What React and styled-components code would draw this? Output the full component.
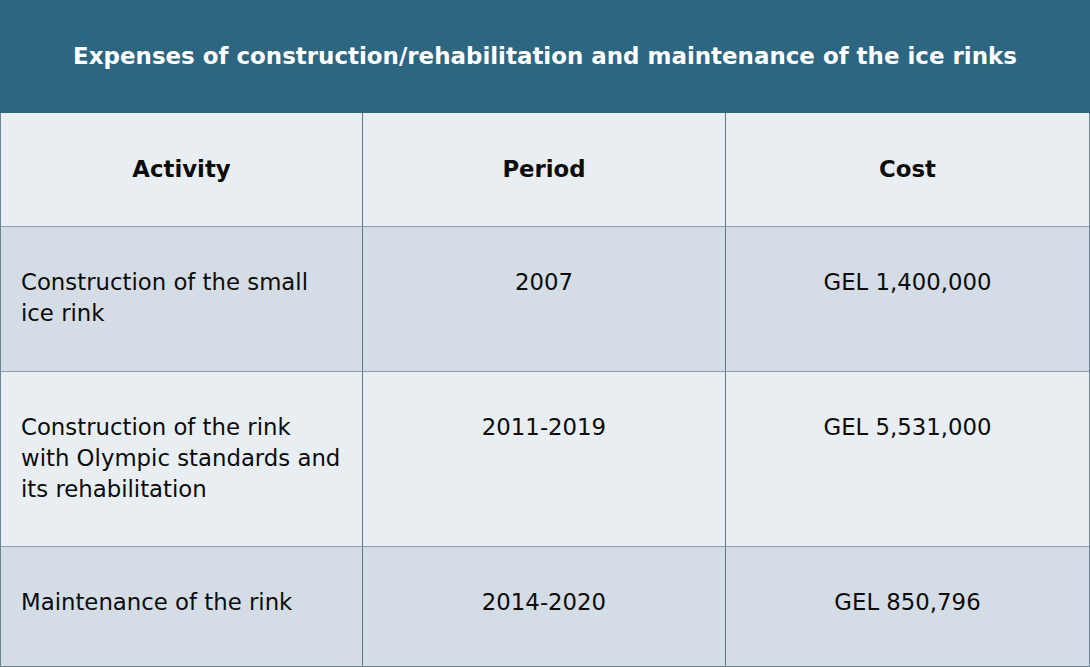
import React from "react";
import styled, { createGlobalStyle } from "styled-components";

const Global = createGlobalStyle`
  html, body { margin: 0; padding: 0; background: #ffffff; }
  body { font-family: "DejaVu Sans", "Liberation Sans", sans-serif; }
`;

const Table = styled.div`
  width: 1090px;
  box-sizing: border-box;
  border-left: 1px solid #6d8593;
  border-right: 1px solid #6d8593;
  border-bottom: 1px solid #6d8593;
  display: grid;
  grid-template-columns: 362px 363px 1fr;
  color: #0c0c0c;
  font-size: 22.8px;
  line-height: 31px;
`;

const Title = styled.div`
  grid-column: 1 / -1;
  height: 113px;
  margin: 0 -1px;
  background: #2d6681;
  color: #ffffff;
  font-weight: bold;
  font-size: 22.95px;
  display: flex;
  align-items: center;
  justify-content: center;
  box-sizing: border-box;
`;

const Cell = styled.div`
  box-sizing: border-box;
  background: ${(p) => p.$bg};
  border-bottom: ${(p) => (p.$last ? "none" : "1px solid #8a9dab")};
  border-right: ${(p) => (p.$end ? "none" : "1px solid #5f7786")};
  text-align: ${(p) => (p.$left ? "left" : "center")};
  padding: ${(p) => (p.$left ? "40px 18px 0 20px" : "40px 10px 0")};
  height: ${(p) => p.$h}px;
`;

const HeadCell = styled.div`
  box-sizing: border-box;
  height: 114px;
  background: #e8eef2;
  border-bottom: 1px solid #8a9dab;
  border-right: ${(p) => (p.$end ? "none" : "1px solid #5f7786")};
  font-weight: bold;
  display: flex;
  align-items: center;
  justify-content: center;
`;

const rows = [
  { h: 145, cells: ["Construction of the small ice rink", "2007", "GEL 1,400,000"] },
  { h: 175, cells: ["Construction of the rink with Olympic standards and its rehabilitation", "2011-2019", "GEL 5,531,000"] },
  { h: 119, cells: ["Maintenance of the rink", "2014-2020", "GEL 850,796"] },
];

export default function App() {
  return (
    <>
      <Global />
      <Table>
        <Title>Expenses of construction/rehabilitation and maintenance of the ice rinks</Title>
        <HeadCell>Activity</HeadCell>
        <HeadCell>Period</HeadCell>
        <HeadCell $end>Cost</HeadCell>
        {rows.map((r, i) => {
          const bg = i % 2 === 0 ? "#d4dde5" : "#e8eef2";
          const last = i === rows.length - 1;
          return (
            <React.Fragment key={i}>
              <Cell $bg={bg} $left $last={last} $h={r.h}>{r.cells[0]}</Cell>
              <Cell $bg={bg} $last={last} $h={r.h}>{r.cells[1]}</Cell>
              <Cell $bg={bg} $last={last} $end $h={r.h}>{r.cells[2]}</Cell>
            </React.Fragment>
          );
        })}
      </Table>
    </>
  );
}
